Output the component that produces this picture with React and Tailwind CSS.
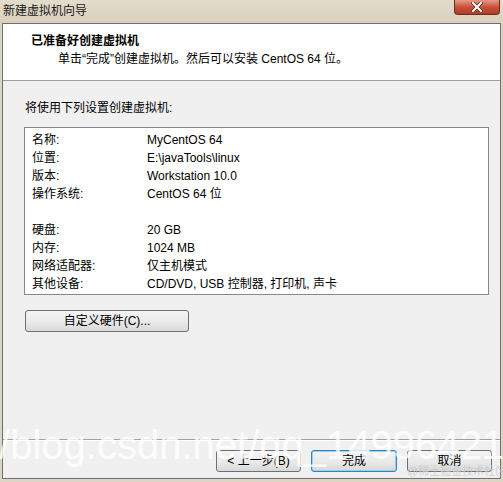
const rows = [
  ["名称:", "MyCentOS 64"],
  ["位置:", "E:\\javaTools\\linux"],
  ["版本:", "Workstation 10.0"],
  ["操作系统:", "CentOS 64 位"],
  null,
  ["硬盘:", "20 GB"],
  ["内存:", "1024 MB"],
  ["网络适配器:", "仅主机模式"],
  ["其他设备:", "CD/DVD, USB 控制器, 打印机, 声卡"],
];

function WinButton({ children, primary, className = "" }) {
  return (
    <button
      className={
        "h-[22px] rounded-[3px] border text-[12px] leading-none text-black bg-gradient-to-b from-[#f4f4f4] via-[#ebebeb] to-[#d9d9d9] " +
        (primary ? "border-[#3c7fb1] shadow-[inset_0_0_0_1px_#8fd3f5] " : "border-[#707070] ") +
        className
      }
    >
      {children}
    </button>
  );
}

export default function App() {
  return (
    <div
      className="relative w-[503px] h-[482px] overflow-hidden bg-[#ddd6c4] flex flex-col text-black"
      style={{ fontFamily: '"Liberation Sans", "Noto Sans CJK SC", sans-serif' }}
    >
      {/* title bar */}
      <div className="h-[23px] flex items-start justify-between bg-gradient-to-b from-[#e3dccb] to-[#d9d1bd]">
        <div className="pl-[3px] pt-[3px] text-[12px] leading-[16px] text-[#1a1a1a]">新建虚拟机向导</div>
        <div className="mr-[3px] w-[46px] h-[15px] rounded-b-[4px] border border-t-0 border-[#6b2b20] bg-gradient-to-b from-[#e49a85] via-[#c9513b] to-[#b23c26] flex items-center justify-center">
          <svg width="12" height="10" viewBox="0 0 12 10">
            <path d="M2 1 L10 9 M10 1 L2 9" stroke="#5a2015" strokeWidth="3.6" strokeLinecap="square" />
            <path d="M2 1 L10 9 M10 1 L2 9" stroke="#ffffff" strokeWidth="2.2" strokeLinecap="square" />
          </svg>
        </div>
      </div>

      {/* client area */}
      <div className="flex-1 mx-[2px] mb-[3px] border border-[#6f6f6f] bg-[#f0f0f0] flex flex-col">
        <div className="h-[57px] bg-white border-b border-[#a0a0a0] pt-[9px] pl-[28px]">
          <div className="text-[12px] leading-[16px] font-bold">已准备好创建虚拟机</div>
          <div className="mt-[2px] pl-[27px] text-[12px] leading-[16px]">
            单击“完成”创建虚拟机。然后可以安装 CentOS 64 位。
          </div>
        </div>

        <div className="flex-1 flex flex-col pl-[21px] pt-[19px]">
          <div className="text-[12px] leading-[16px] pl-[1px]">将使用下列设置创建虚拟机:</div>
          <div className="mt-[11px] w-[465px] h-[168px] bg-white border border-[#828790] pt-[3px] pl-[7px]">
            {rows.map((r, i) =>
              r ? (
                <div key={i} className="flex h-[18px] items-center text-[12px]">
                  <span className="w-[115px]">{r[0]}</span>
                  <span>{r[1]}</span>
                </div>
              ) : (
                <div key={i} className="h-[18px]" />
              )
            )}
          </div>
          <WinButton className="mt-[15px] ml-[1px] w-[164px]">自定义硬件(C)...</WinButton>
          <div className="flex-1" />
        </div>

        <div className="h-[39px] border-t border-[#a0a0a0] shadow-[inset_0_1px_0_#ffffff] flex items-start justify-end gap-[10px] pt-[10px] pr-[8px]">
          <WinButton className="w-[85px]">&lt; 上一步(B)</WinButton>
          <WinButton primary className="w-[86px]">完成</WinButton>
          <WinButton className="w-[85px]">取消</WinButton>
        </div>
      </div>

      {/* watermark */}
      <div className="absolute left-[-12px] top-[425px] text-[40px] leading-none text-white/80 whitespace-nowrap pointer-events-none">
        //blog.csdn.net/qq_14996421
      </div>
      <div className="absolute left-[407px] top-[466px] text-[11px] leading-none text-[#c8c8c8]/80 whitespace-nowrap pointer-events-none">
        @稀土掘金技术社区
      </div>
    </div>
  );
}
